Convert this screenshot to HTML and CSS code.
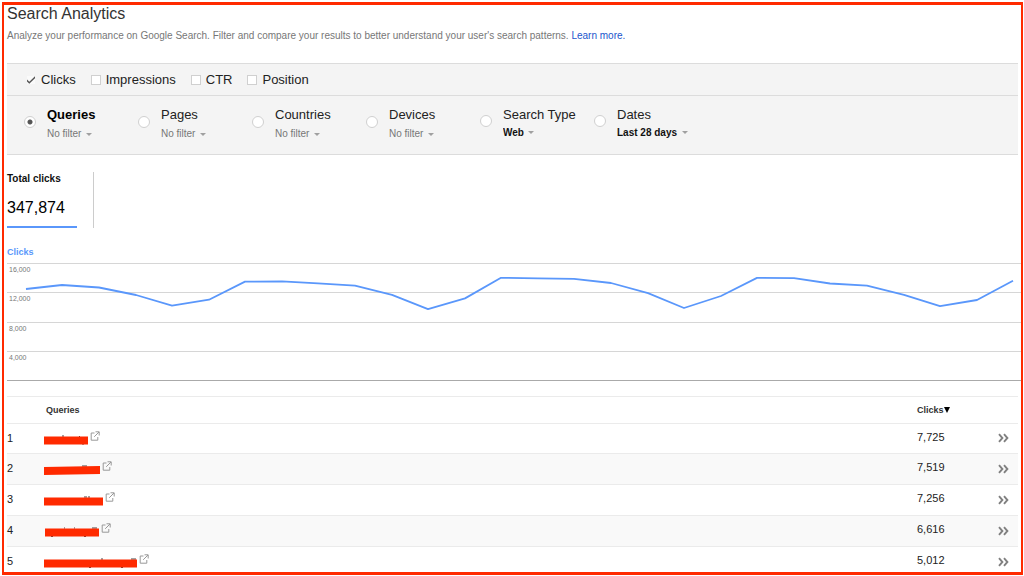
FILE: index.html
```
<!DOCTYPE html>
<html lang="en">
<head>
<meta charset="utf-8">
<title>Search Analytics</title>
<link rel="stylesheet" href="styles.css">
</head>
<body>
<svg class="defs" aria-hidden="true">
  <symbol id="caret" viewBox="0 0 6 3"><path d="M0 0h6L3 3z" fill="#a0a0a0"/></symbol>
  <symbol id="open" viewBox="0 0 10 10"><path d="M4.5 2H1.2v7.2h6.6V6M5.5 .8h3.7v3.7M9 1 4.2 5.8" fill="none" stroke="#999" stroke-width="1"/></symbol>
  <symbol id="more" viewBox="0 0 12 10"><path d="M2 1.2 5.4 5 2 8.8M7 1.2 10.400 5 7 8.8" fill="none" stroke="#808080" stroke-width="1.900"/></symbol>
</svg>
<main class="frame">
  <header class="intro">
    <h1 class="title">Search Analytics</h1>
    <p class="lead">Analyze your performance on Google Search. Filter and compare your results to better understand your user's search patterns. <a class="link" href="#">Learn more.</a></p>
  </header>

  <form class="controls">
    <div class="metrics">
      <label class="metric"><input class="check" type="checkbox" checked>Clicks</label>
      <label class="metric"><input class="check" type="checkbox">Impressions</label>
      <label class="metric"><input class="check" type="checkbox">CTR</label>
      <label class="metric"><input class="check" type="checkbox">Position</label>
    </div>
    <div class="dimensions">
      <div class="dimension">
        <input class="radio" type="radio" name="dim" id="queries" checked>
        <div class="choice"><label class="name" for="queries">Queries</label>
        <span class="filter"><select class="select" aria-label="Queries filter"><option>No filter</option></select><svg class="caret"><use href="#caret"/></svg></span></div>
      </div>
      <div class="dimension">
        <input class="radio" type="radio" name="dim" id="pages">
        <div class="choice"><label class="name" for="pages">Pages</label>
        <span class="filter"><select class="select" aria-label="Pages filter"><option>No filter</option></select><svg class="caret"><use href="#caret"/></svg></span></div>
      </div>
      <div class="dimension">
        <input class="radio" type="radio" name="dim" id="countries">
        <div class="choice"><label class="name" for="countries">Countries</label>
        <span class="filter"><select class="select" aria-label="Countries filter"><option>No filter</option></select><svg class="caret"><use href="#caret"/></svg></span></div>
      </div>
      <div class="dimension">
        <input class="radio" type="radio" name="dim" id="devices">
        <div class="choice"><label class="name" for="devices">Devices</label>
        <span class="filter"><select class="select" aria-label="Devices filter"><option>No filter</option></select><svg class="caret"><use href="#caret"/></svg></span></div>
      </div>
      <div class="dimension set">
        <input class="radio" type="radio" name="dim" id="type">
        <div class="choice"><label class="name" for="type">Search Type</label>
        <span class="filter"><select class="select" aria-label="Search type filter"><option>Web</option></select><svg class="caret"><use href="#caret"/></svg></span></div>
      </div>
      <div class="dimension set">
        <input class="radio" type="radio" name="dim" id="dates">
        <div class="choice"><label class="name" for="dates">Dates</label>
        <span class="filter"><select class="select" aria-label="Date range"><option>Last 28 days</option></select><svg class="caret"><use href="#caret"/></svg></span></div>
      </div>
    </div>
  </form>

  <section class="totals">
    <div class="total">
      <h2 class="total-name">Total clicks</h2>
      <div class="total-value">347,874</div>
    </div>
  </section>

  <section class="chart">
    <h2 class="chart-name">Clicks</h2>
    <div class="plot">
      <div class="band">16,000</div>
      <div class="band">12,000</div>
      <div class="band">8,000</div>
      <div class="band">4,000</div>
      <svg class="series" viewBox="0 0 1014 117" preserveAspectRatio="none" role="img" aria-label="Clicks over the last 28 days">
        <polyline vector-effect="non-scaling-stroke" fill="none" stroke="#5a97fb" stroke-width="1.8" stroke-linejoin="round" points="19,26 55,22 92,24.5 129,32 165,42.7 202,36.7 238,18.6 275,18.4 311,20.4 348,22.6 385,31.8 421,46.2 458,35.4 494,14.8 531,15.4 567,15.9 604,20 641,30.2 677,45 714,33 750,14.9 787,15.2 823,20.5 860,22.6 897,31.8 933,43.2 970,37 1006,17.7"/>
      </svg>
    </div>
  </section>

  <table class="table">
    <thead>
      <tr><th class="rank" aria-label="Rank"></th><th class="query">Queries</th><th class="clicks">Clicks<svg class="sort" viewBox="0 0 6 6"><path d="M0 0h6L3 6z"/></svg></th><th class="go" aria-label="Details"></th></tr>
    </thead>
    <tbody>
      <tr><td class="rank">1</td><td class="query"><div class="term">
        <svg class="mask" width="44" height="10"><path d="M18 1h2M35 1l1 1M38 9h2" stroke="#444"/><path d="M0 1.500h44v8H0z" fill="#ff2a00"/></svg>
        <a class="ext" href="#" aria-label="Open page"><svg class="icon"><use href="#open"/></svg></a></div></td><td class="clicks">7,725</td><td class="go"><a href="#" aria-label="Details"><svg class="more"><use href="#more"/></svg></a></td></tr>
      <tr><td class="rank">2</td><td class="query"><div class="term">
        <svg class="mask" width="56" height="10"><path d="M38 1h5" stroke="#444"/><path d="M0 2l56-1v8L0 10z" fill="#ff2a00"/></svg>
        <a class="ext" href="#" aria-label="Open page"><svg class="icon"><use href="#open"/></svg></a></div></td><td class="clicks">7,519</td><td class="go"><a href="#" aria-label="Details"><svg class="more"><use href="#more"/></svg></a></td></tr>
      <tr><td class="rank">3</td><td class="query"><div class="term">
        <svg class="mask" width="59" height="10"><path d="M40 1h3M44 1h2" stroke="#444"/><path d="M0 1.500h59v8H0z" fill="#ff2a00"/></svg>
        <a class="ext" href="#" aria-label="Open page"><svg class="icon"><use href="#open"/></svg></a></div></td><td class="clicks">7,256</td><td class="go"><a href="#" aria-label="Details"><svg class="more"><use href="#more"/></svg></a></td></tr>
      <tr><td class="rank">4</td><td class="query"><div class="term">
        <svg class="mask" width="55" height="10"><path d="M20 1h1M30 1h1M48 1h5M7 9.500h2M40 9.500h2" stroke="#444"/><path d="M1 1.500h54v8H1z" fill="#ff2a00"/></svg>
        <a class="ext" href="#" aria-label="Open page"><svg class="icon"><use href="#open"/></svg></a></div></td><td class="clicks">6,616</td><td class="go"><a href="#" aria-label="Details"><svg class="more"><use href="#more"/></svg></a></td></tr>
      <tr><td class="rank">5</td><td class="query"><div class="term">
        <svg class="mask" width="93" height="10"><path d="M57 1h2M87 1h5M45 9.500h2M77 9.500h2" stroke="#444"/><path d="M0 1.500h93v8H0z" fill="#ff2a00"/></svg>
        <a class="ext" href="#" aria-label="Open page"><svg class="icon"><use href="#open"/></svg></a></div></td><td class="clicks">5,012</td><td class="go"><a href="#" aria-label="Details"><svg class="more"><use href="#more"/></svg></a></td></tr>
    </tbody>
  </table>
</main>
</body>
</html>
```
FILE: styles.css
```
* { box-sizing: border-box; }
html { background: #fff; }
body {
  margin: 0;
  padding: 2px 1px 1px 2px;
  height: 100vh;
  font-family: "Liberation Sans", Arial, sans-serif;
  color: #222;
}
h1, h2, p { margin: 0; }
.defs { position: absolute; width: 0; height: 0; }
.frame {
  height: 100%;
  overflow: hidden;
  border: 2px solid #ff2a00;
  border-top-width: 3px;
  border-bottom-width: 3px;
  padding-left: 3px;
}

.intro { height: 58px; }
.title { font-size: 16px; line-height: 18px; font-weight: 400; color: #333; }
.lead { margin-top: 5px; font-size: 10px; line-height: 16px; color: #777; }
.link { color: #1a56cc; text-decoration: none; }

.controls {
  margin-right: 3px;
  background: #f4f4f4;
  border-top: 1px solid #dcdcdc;
  border-bottom: 1px solid #dcdcdc;
}
.metrics {
  display: flex;
  align-items: center;
  gap: 15px;
  height: 32px;
  padding-left: 19px;
  font-size: 13px;
  border-bottom: 1px solid #dcdcdc;
}
.metric { display: flex; align-items: center; gap: 5px; }
.check, .radio { appearance: none; margin: 0; flex: none; background: #fff; border: 1px solid #d0d0d0; }
.check { width: 10px; height: 10px; }
.check:checked {
  border-color: #f4f4f4;
  background: #fafafa url("data:image/svg+xml,%3Csvg xmlns='http://www.w3.org/2000/svg' viewBox='0 0 10 8'%3E%3Cpath d='M.5 4 3.3 6.700 9.500 .8' fill='none' stroke='%23555' stroke-width='1.500'/%3E%3C/svg%3E") center / 10px 8px no-repeat border-box;
}
.dimensions { display: flex; height: 58px; padding: 11px 0 0 17px; }
.dimension { display: flex; align-items: center; gap: 11px; width: 114px; height: 34px; }
.dimension.set { height: 32px; }
.radio { width: 12px; height: 12px; margin-bottom: 5px; border-radius: 50%; }
.radio:checked { background: radial-gradient(circle, #555 0 2px, #fff 3px); }
.choice { display: flex; flex-direction: column; gap: 4px; white-space: nowrap; }
.set .choice { gap: 3px; }
.name { font-size: 13px; line-height: 16px; }
.radio:checked + .choice .name { font-weight: 700; color: #000; }
.filter { display: flex; align-items: center; gap: 4px; height: 14px; }
.select {
  appearance: none;
  border: 0;
  padding: 0;
  background: none;
  font: 10px/14px "Liberation Sans", Arial, sans-serif;
  color: #777;
}
.set .select { font-weight: 700; color: #111; }
.caret { width: 6px; height: 3px; }

.totals { display: flex; padding-top: 17px; }
.total { width: 87px; height: 56px; padding-right: 16px; border-right: 1px solid #ccc; }
.total-name { font-size: 10px; line-height: 14px; color: #111; }
.total-value {
  padding-top: 12px;
  height: 42px;
  font-size: 16px;
  line-height: 20px;
  color: #000;
  border-bottom: 2px solid #5a97fb;
}

.chart { padding-top: 18px; }
.chart-name { font-size: 9px; line-height: 12px; color: #5a97fb; }
.plot {
  position: relative;
  display: flex;
  flex-direction: column;
  margin-top: 5px;
  height: 118px;
  border-bottom: 1px solid #aaa;
}
.band {
  flex: 1;
  padding: 1px 2px;
  border-top: 1px solid #d6d6d6;
  font-size: 7px;
  line-height: 10px;
  color: #777;
}
.series { position: absolute; inset: 0; width: 100%; height: 100%; }

.table {
  margin-top: 15px;
  width: calc(100% - 3px);
  border-collapse: collapse;
  table-layout: fixed;
  font-size: 11px;
}
.table th, .table td { padding: 0; text-align: left; border-top: 1px solid #ebebeb; }
.table th { height: 27px; font-size: 9px; color: #333; }
.table td { height: 31px; padding-bottom: 2px; }
.table tbody tr:first-child td { height: 30px; }
.table tbody tr:nth-child(even) { background: #f9f9f9; }
.rank { width: 37px; }
.table .query { padding-left: 2px; }
.table td.query { padding-left: 0; }
.clicks { width: 80px; }
.table td.clicks { padding-bottom: 4px; }
.go { width: 21px; }
.sort { width: 6px; height: 6px; }
.term { display: flex; align-items: flex-end; gap: 2px; height: 14px; }
.mask { flex: none; }
.ext { align-self: flex-start; height: 10px; }
.icon { display: block; width: 10px; height: 10px; }
.more { display: block; width: 12px; height: 10px; margin-top: 1px; }
```
